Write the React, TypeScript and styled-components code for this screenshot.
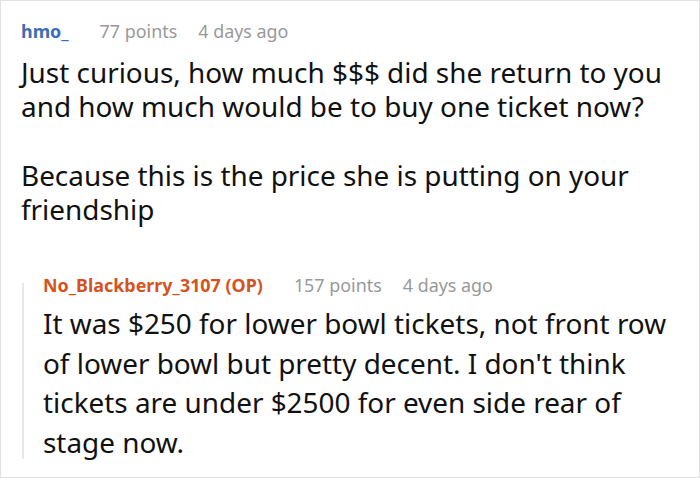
import React from "react";
import styled, { createGlobalStyle } from "styled-components";

const Global = createGlobalStyle`
  html, body { margin: 0; padding: 0; background: #fff; }
  body { font-family: "Noto Sans", "Open Sans", sans-serif; }
`;

const Card = styled.div`
  box-sizing: border-box;
  width: 700px;
  height: 478px;
  border: 1px solid #e2e2e2;
  padding: 17px 12px 0 20px;
  overflow: hidden;
`;

const Meta = styled.div`
  display: flex;
  align-items: baseline;
  font-size: 17.9px;
  line-height: 26px;
`;

const Author = styled.span<{ $op?: boolean }>`
  font-weight: 700;
  color: ${(p) => (p.$op ? "#d4531f" : "#3d6cb9")};
  margin-right: 31px;
`;

const Points = styled.span`
  color: #999;
  margin-right: 21px;
`;

const Time = styled.span`
  color: #999;
`;

const Body = styled.div<{ $size: number; $lh: number; $top: number; $gap?: number }>`
  color: #111;
  font-size: ${(p) => p.$size}px;
  line-height: ${(p) => p.$lh}px;
  margin-top: ${(p) => p.$top}px;
  p { margin: 0; }
  p + p { margin-top: ${(p) => p.$gap ?? p.$lh}px; }
`;

const Reply = styled.div`
  position: relative;
  margin-top: 46px;
  padding-left: 22px;
  &::before {
    content: "";
    position: absolute;
    left: 1px;
    top: 11px;
    bottom: 3px;
    width: 2px;
    background: #e8e8e8;
  }
`;

export default function App() {
  return (
    <>
      <Global />
      <Card>
        <Meta>
          <Author>hmo_</Author>
          <Points>77 points</Points>
          <Time>4 days ago</Time>
        </Meta>
        <Body $size={27.9} $lh={34} $top={11} $gap={35}>
          <p>Just curious, how much $$$ did she return to you and how much would be to buy one ticket now?</p>
          <p>Because this is the price she is putting on your friendship</p>
        </Body>
        <Reply>
          <Meta>
            <Author $op>No_Blackberry_3107 (OP)</Author>
            <Points>157 points</Points>
            <Time>4 days ago</Time>
          </Meta>
          <Body $size={27.9} $lh={39.5} $top={6}>
            <p>It was $250 for lower bowl tickets, not front row of lower bowl but pretty decent. I don't think tickets are under $2500 for even side rear of stage now.</p>
          </Body>
        </Reply>
      </Card>
    </>
  );
}
